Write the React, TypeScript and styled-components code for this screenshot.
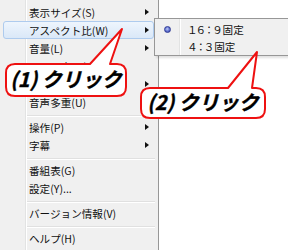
import React from "react";
import styled, { createGlobalStyle, css } from "styled-components";

const Global = createGlobalStyle`
  html, body { margin: 0; padding: 0; background: #fff; }
  body { font-family: "Noto Sans CJK JP", "Noto Sans", sans-serif; }
`;

const Screen = styled.div`
  position: relative;
  width: 288px;
  height: 250px;
  overflow: hidden;
  background: #fff;
`;

const Menu = styled.div`
  width: 159px;
  height: 250px;
  box-sizing: border-box;
  padding-top: 3px;
  display: flex;
  flex-direction: column;
  border-right: 1px solid #979797;
  background: linear-gradient(
    to right,
    #f0f0f0 25px,
    #e2e3e3 25px,
    #e2e3e3 26px,
    #ffffff 26px,
    #ffffff 27px,
    #f0f0f0 27px
  );
`;

const Row = styled.div<{ $active?: boolean }>`
  height: 18px;
  width: 151px;
  margin-left: 3px;
  box-sizing: border-box;
  padding: 0 4px 0 25px;
  display: flex;
  align-items: center;
  justify-content: space-between;
  border: 1px solid transparent;
  border-radius: 3px;
  font-size: 10.6px;
  color: #111;
  white-space: nowrap;
  ${(p) =>
    p.$active &&
    css`
      background: linear-gradient(#eef5fd, #dae8f8);
      border-color: #aecbee;
    `}
`;

const Arrow = styled.span`
  width: 0;
  height: 0;
  border-left: 4px solid #111;
  border-top: 3.5px solid transparent;
  border-bottom: 3.5px solid transparent;
`;

const Separator = styled.div`
  height: 7px;
  margin: 0 3px 0 27px;
  display: flex;
  align-items: center;
  &::after {
    content: "";
    flex: 1;
    height: 0;
    border-top: 1px solid #e0e0e0;
    border-bottom: 1px solid #ffffff;
    margin-top: 2px;
  }
`;

const SubMenu = styled.div`
  position: absolute;
  left: 154px;
  top: 18px;
  width: 150px;
  box-sizing: border-box;
  padding-top: 2px;
  border: 1px solid #979797;
  background: linear-gradient(
    to right,
    #f0f0f0 24px,
    #e2e3e3 24px,
    #e2e3e3 25px,
    #ffffff 25px,
    #ffffff 26px,
    #f0f0f0 26px
  );
  box-shadow: 2px 2px 2px rgba(0, 0, 0, 0.12);
`;

const SubRow = styled.div`
  height: 17px;
  display: grid;
  grid-template-columns: 24px 1fr;
  align-items: center;
  font-size: 10.6px;
  color: #111;
  white-space: nowrap;
`;

const IconCell = styled.span`
  display: flex;
  justify-content: center;
  align-items: center;
`;

const Label = styled.span`
  padding-left: 8px;
`;

const Digits = styled.span`
  letter-spacing: -2.2px;
  margin-right: 2px;
`;

const RadioDot = styled.span`
  width: 7px;
  height: 7px;
  border-radius: 50%;
  box-sizing: border-box;
  border: 1px solid #2e3a96;
  background: radial-gradient(circle at 45% 40%, #c0cbf4 0, #6f80d8 45%, #2c389e 100%);
`;

const CalloutBox = styled.div<{ $x: number; $y: number; $w: number; $h: number }>`
  position: absolute;
  left: ${(p) => p.$x}px;
  top: ${(p) => p.$y}px;
  width: ${(p) => p.$w}px;
  height: ${(p) => p.$h}px;
  display: flex;
  align-items: center;
  justify-content: center;
`;

const CalloutShape = styled.svg`
  position: absolute;
  left: 0;
  top: 0;
  overflow: visible;
`;

const CalloutText = styled.span`
  position: relative;
  font-family: "Noto Sans CJK JP", "Noto Sans", sans-serif;
  font-weight: 700;
  font-style: italic;
  font-size: 20px;
  line-height: 1;
  color: #000;
  white-space: nowrap;
  margin-top: -2px;
  -webkit-text-stroke: 0.4px #000;
`;

type CalloutProps = {
  x: number;
  y: number;
  w: number;
  h: number;
  b1: number;
  b2: number;
  ax: number;
  ay: number;
  text: string;
};

function Callout({ x, y, w, h, b1, b2, ax, ay, text }: CalloutProps) {
  const r = 9;
  const L = 1;
  const T = 1;
  const R = w - 1;
  const B = h - 1;
  const d = `M ${L + r} ${T} L ${b1} ${T} L ${ax} ${ay} L ${b2} ${T} L ${R - r} ${T} Q ${R} ${T} ${R} ${T + r} L ${R} ${B - r} Q ${R} ${B} ${R - r} ${B} L ${L + r} ${B} Q ${L} ${B} ${L} ${B - r} L ${L} ${T + r} Q ${L} ${T} ${L + r} ${T} Z`;
  return (
    <CalloutBox $x={x} $y={y} $w={w} $h={h}>
      <CalloutShape width={w} height={h} viewBox={`0 0 ${w} ${h}`}>
        <path d={d} fill="#fff" stroke="#ee1111" strokeWidth={2} strokeLinejoin="round" />
      </CalloutShape>
      <CalloutText>{text}</CalloutText>
    </CalloutBox>
  );
}

type Item = { label: string; arrow?: boolean; active?: boolean } | "sep";

const items: Item[] = [
  { label: "表示サイズ(S)", arrow: true },
  { label: "アスペクト比(W)", arrow: true, active: true },
  { label: "音量(L)", arrow: true },
  { label: "画面の表示(D)" },
  { label: "チャンネル(C)", arrow: true },
  { label: "音声多重(U)" },
  "sep",
  { label: "操作(P)", arrow: true },
  { label: "字幕", arrow: true },
  "sep",
  { label: "番組表(G)" },
  { label: "設定(Y)..." },
  "sep",
  { label: "バージョン情報(V)" },
  "sep",
  { label: "ヘルプ(H)" },
];

export default function App() {
  return (
    <Screen>
      <Global />
      <Menu>
        {items.map((it, i) =>
          it === "sep" ? (
            <Separator key={i} />
          ) : (
            <Row key={i} $active={it.active}>
              <span>{it.label}</span>
              {it.arrow && <Arrow />}
            </Row>
          )
        )}
      </Menu>
      <SubMenu>
        <SubRow>
          <IconCell>
            <RadioDot />
          </IconCell>
          <Label>
            <Digits>１６：９</Digits>固定
          </Label>
        </SubRow>
        <SubRow>
          <IconCell />
          <Label>
            <Digits>４：３</Digits>固定
          </Label>
        </SubRow>
      </SubMenu>
      <Callout x={5} y={63} w={122} h={34} b1={85} b2={105} ax={117} ay={-34} text="(1) クリック" />
      <Callout x={140} y={87} w={126} h={32} b1={88} b2={112} ax={117} ay={-35} text="(2) クリック" />
    </Screen>
  );
}
